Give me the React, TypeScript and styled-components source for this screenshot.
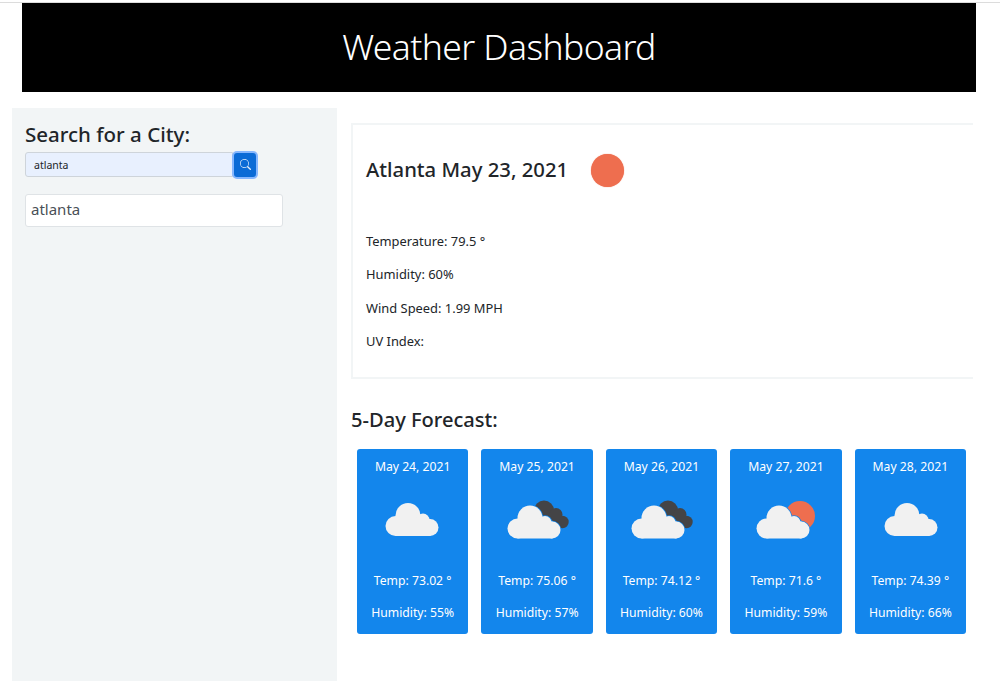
import styled, { createGlobalStyle } from "styled-components";
import { BsSearch } from "react-icons/bs";

const GlobalStyle = createGlobalStyle`
  html, body {
    margin: 0;
    background: #fff;
    color: #212529;
    font-family: "Noto Sans", "Open Sans", sans-serif;
  }
`;

const Page = styled.div`
  height: 700px;
  overflow: hidden;
  padding-top: 2px;
  box-sizing: border-box;
`;

const Header = styled.header`
  border-top: 1px solid #dcdcdc;
  padding: 0 24px 0 22px;
`;

const Title = styled.h1`
  margin: 0;
  height: 89px;
  background: #000;
  color: #fff;
  font-size: 35.5px;
  font-weight: 300;
  letter-spacing: -0.6px;
  line-height: 86px;
  text-align: center;
`;

const Columns = styled.div`
  display: flex;
  gap: 14px;
  margin-top: 16px;
  padding-left: 12px;
`;

const Sidebar = styled.aside`
  width: 325px;
  height: 573px;
  padding: 11px 13px;
  box-sizing: border-box;
  background: #f2f5f6;
`;

const SearchTitle = styled.h2`
  margin: 0 0 2px;
  font-size: 20.5px;
  font-weight: 500;
  line-height: 30px;
`;

const SearchRow = styled.form`
  display: flex;
  align-items: center;
  height: 27px;
`;

const SearchInput = styled.input`
  width: 208px;
  height: 25px;
  padding: 0 8px;
  box-sizing: border-box;
  border: 1px solid #ced4da;
  border-radius: 3px 0 0 3px;
  background: #e8f0fe;
  color: #212529;
  font-family: inherit;
  font-size: 10.5px;
  outline: none;
`;

const SearchButton = styled.button`
  display: flex;
  align-items: center;
  justify-content: center;
  width: 22px;
  height: 24px;
  margin-left: 1px;
  padding: 0;
  border: none;
  border-radius: 3px;
  background: #0b6bd6;
  color: #e4eefb;
  font-size: 11px;
  box-shadow: 0 0 0 2px #86b7fe;
`;

const HistoryItem = styled.div`
  width: 258px;
  height: 33px;
  margin-top: 16px;
  padding-left: 5px;
  box-sizing: border-box;
  border: 1px solid #dfe3e6;
  border-radius: 3px;
  background: #fff;
  color: #495057;
  font-size: 15px;
  line-height: 29px;
`;

const Main = styled.main`
  width: 623px;
  padding-top: 15px;
`;

const TodayCard = styled.section`
  width: 622px;
  height: 256px;
  padding: 0 13px;
  box-sizing: border-box;
  border: 2px solid #f2f5f6;
  border-right: none;
`;

const TodayHeading = styled.div`
  display: flex;
  align-items: center;
  gap: 23px;
  height: 87px;
`;

const CityDate = styled.h2`
  margin: 0;
  font-size: 20.3px;
  font-weight: 500;
`;

const SunDot = styled.span`
  width: 33px;
  height: 33px;
  border-radius: 50%;
  background: #ee6e4f;
  box-shadow: 0 0 1px #ee6e4f;
  transform: translateY(2px);
`;

const StatList = styled.div`
  display: flex;
  flex-direction: column;
  gap: 13.3px;
  margin-top: 19px;
`;

const Stat = styled.p`
  margin: 0;
  font-size: 12.9px;
  line-height: 20px;
`;

const ForecastTitle = styled.h3`
  margin: 26px 0 14px;
  font-size: 20.1px;
  font-weight: 500;
  line-height: 30px;
`;

const ForecastRow = styled.div`
  display: flex;
  justify-content: space-between;
  padding: 0 8px 0 6px;
`;

const DayCard = styled.article`
  display: flex;
  flex-direction: column;
  align-items: center;
  width: 111.3px;
  height: 185px;
  padding-top: 9px;
  box-sizing: border-box;
  border-radius: 3px;
  background: #1386ec;
  color: #fff;
  font-size: 12.2px;
`;

const DayLine = styled.div`
  line-height: 18px;
  white-space: nowrap;
`;

const IconBox = styled.svg<{ $shift?: number }>`
  display: block;
  width: 80px;
  height: 50px;
  margin: 19px 0 27px ${(p) => p.$shift ?? 0}px;
`;

const HumidityLine = styled(DayLine)`
  margin-top: 14px;
`;

type Kind = "cloud" | "overcast" | "sun";

const CloudShape = ({ x = 0, y = 0, fill, stroke }: { x?: number; y?: number; fill: string; stroke?: string }) => (
  <g
    transform={`translate(${x} ${y})`}
    fill={fill}
    stroke={stroke}
    strokeWidth={stroke ? 1.5 : 0}
    paintOrder="stroke"
  >
    <circle cx="35" cy="20.5" r="12.5" />
    <circle cx="50" cy="25" r="6.5" />
    <circle cx="22.5" cy="31" r="10" />
    <circle cx="57" cy="32.5" r="8.5" />
    <rect x="22.5" y="24" width="35" height="17" />
  </g>
);

function WeatherIcon({ kind, shift }: { kind: Kind; shift?: number }) {
  if (kind === "cloud") {
    return (
      <IconBox viewBox="0 0 80 50" $shift={shift}>
        <CloudShape fill="#f1f1f1" />
      </IconBox>
    );
  }
  return (
    <IconBox viewBox="0 0 80 50" $shift={shift}>
      {kind === "overcast" ? (
        <g fill="#444446">
          <circle cx="47" cy="15.5" r="10" />
          <circle cx="59" cy="19.5" r="6.5" />
          <circle cx="65.5" cy="27" r="6.2" />
          <rect x="45" y="20" width="20" height="13" />
        </g>
      ) : (
        <circle cx="54" cy="21" r="15" fill="#ee6e4f" />
      )}
      <CloudShape x={-2} y={2.5} fill="#1386ec" stroke="#1386ec" />
      <CloudShape x={-2} y={2.5} fill="#f1f1f1" />
    </IconBox>
  );
}

const forecast: { date: string; kind: Kind; temp: string; humidity: string; shift?: number }[] = [
  { date: "May 24, 2021", kind: "cloud", temp: "73.02", humidity: "55" },
  { date: "May 25, 2021", kind: "overcast", temp: "75.06", humidity: "57" },
  { date: "May 26, 2021", kind: "overcast", temp: "74.12", humidity: "60" },
  { date: "May 27, 2021", kind: "sun", temp: "71.6", humidity: "59" },
  { date: "May 28, 2021", kind: "cloud", temp: "74.39", humidity: "66", shift: 3 },
];

export default function App() {
  return (
    <Page>
      <GlobalStyle />
      <Header>
        <Title>Weather Dashboard</Title>
      </Header>
      <Columns>
        <Sidebar>
          <SearchTitle>Search for a City:</SearchTitle>
          <SearchRow onSubmit={(e) => e.preventDefault()}>
            <SearchInput defaultValue="atlanta" />
            <SearchButton type="submit" aria-label="Search">
              <BsSearch />
            </SearchButton>
          </SearchRow>
          <HistoryItem>atlanta</HistoryItem>
        </Sidebar>
        <Main>
          <TodayCard>
            <TodayHeading>
              <CityDate>Atlanta May 23, 2021</CityDate>
              <SunDot />
            </TodayHeading>
            <StatList>
              <Stat>Temperature: 79.5 °</Stat>
              <Stat>Humidity: 60%</Stat>
              <Stat>Wind Speed: 1.99 MPH</Stat>
              <Stat>UV Index:</Stat>
            </StatList>
          </TodayCard>
          <ForecastTitle>5-Day Forecast:</ForecastTitle>
          <ForecastRow>
            {forecast.map((day) => (
              <DayCard key={day.date}>
                <DayLine>{day.date}</DayLine>
                <WeatherIcon kind={day.kind} shift={day.shift} />
                <DayLine>Temp: {day.temp} °</DayLine>
                <HumidityLine>Humidity: {day.humidity}%</HumidityLine>
              </DayCard>
            ))}
          </ForecastRow>
        </Main>
      </Columns>
    </Page>
  );
}
